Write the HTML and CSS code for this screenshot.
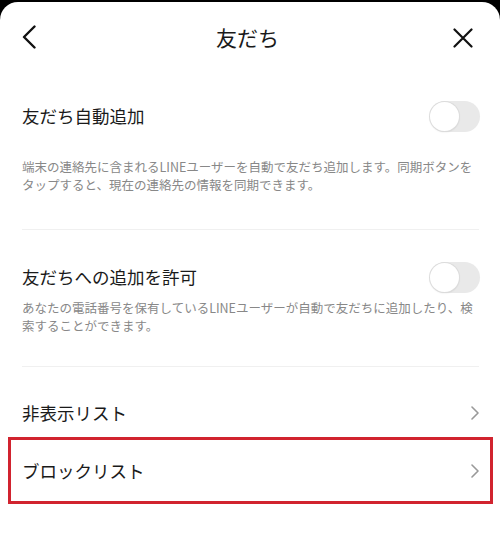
FILE: index.html
```html
<!DOCTYPE html>
<html lang="ja">
<head>
<meta charset="utf-8">
<link rel="stylesheet" href="styles.css">
</head>
<body>
<div class="sheet">
  <header class="header">
    <svg class="icon-back" width="14" height="24" viewBox="0 0 14 24"><path d="M12.5 1.5 L2 12 L12.5 22.5" fill="none" stroke="#111" stroke-width="2.4" stroke-linecap="round" stroke-linejoin="round"/></svg>
    <h1 class="title">友だち</h1>
    <svg class="icon-close" width="20" height="20" viewBox="0 0 20 20"><path d="M1.5 1.5 L18.5 18.5 M18.5 1.5 L1.5 18.5" fill="none" stroke="#111" stroke-width="2.2" stroke-linecap="round"/></svg>
  </header>

  <section class="section s1">
    <div class="row">
      <span class="label">友だち自動追加</span>
      <span class="toggle"><span class="knob"></span></span>
    </div>
    <p class="desc d1">端末の連絡先に含まれるLINEユーザーを自動で友だち追加します。同期ボタンをタップすると、現在の連絡先の情報を同期できます。</p>
  </section>
  <div class="divider"></div>

  <section class="section s2">
    <div class="row">
      <span class="label">友だちへの追加を許可</span>
      <span class="toggle"><span class="knob"></span></span>
    </div>
    <p class="desc d2">あなたの電話番号を保有しているLINEユーザーが自動で友だちに追加したり、検索することができます。</p>
  </section>
  <div class="divider"></div>

  <section class="list">
    <div class="link-row">
      <span class="label">非表示リスト</span>
      <svg class="chev" width="8" height="14" viewBox="0 0 8 14"><path d="M1 1 L7 7 L1 13" fill="none" stroke="#999" stroke-width="1.6" stroke-linecap="round" stroke-linejoin="round"/></svg>
    </div>
    <div class="link-row highlighted">
      <span class="label">ブロックリスト</span>
      <svg class="chev" width="8" height="14" viewBox="0 0 8 14"><path d="M1 1 L7 7 L1 13" fill="none" stroke="#999" stroke-width="1.6" stroke-linecap="round" stroke-linejoin="round"/></svg>
    </div>
  </section>
</div>
</body>
</html>
```
FILE: styles.css
```css
html, body {
  margin: 0;
  padding: 0;
  background: #000;
}
body {
  width: 500px;
  height: 546px;
  overflow: hidden;
  font-family: "Noto Sans CJK JP", "Noto Sans", sans-serif;
  color: #1a1a1a;
}
.sheet {
  margin-top: 2px;
  height: 544px;
  background: #fff;
  border-radius: 18px 18px 0 0;
}
.header {
  height: 70px;
  display: flex;
  align-items: center;
  justify-content: space-between;
  padding: 0 27px 0 22px;
}
.title {
  margin: 0;
  font-size: 21px;
  font-weight: 400;
  line-height: 1;
  margin-left: 6px;
}
.icon-close {
  margin-top: 2px;
}
.section {
  padding: 0 20px 0 22px;
}
.s1 {
  padding-top: 26px;
  padding-bottom: 35px;
}
.s2 {
  padding-top: 29px;
  padding-bottom: 31px;
}
.row {
  height: 36px;
  display: flex;
  align-items: center;
  justify-content: space-between;
}
.label {
  font-size: 17.5px;
  line-height: 1;
}
.toggle {
  width: 50px;
  height: 31px;
  border-radius: 16px;
  background: #e9e9e9;
  display: flex;
  align-items: center;
  box-sizing: border-box;
}
.knob {
  width: 29px;
  height: 29px;
  border-radius: 50%;
  background: #fff;
  box-shadow: 0 0 0 1px #dcdcdc, 0 1px 2px rgba(0,0,0,0.12);
}
.desc {
  margin: 0;
  font-size: 12.5px;
  line-height: 18px;
  color: #888;
}
.d1 {
  margin-top: 24px;
}
.d2 {
  margin-top: 4px;
}
.divider {
  height: 1px;
  background: #f0f0f0;
  margin: 0 21px 0 22px;
}
.list {
  padding-top: 22px;
}
.link-row {
  height: 48px;
  display: flex;
  align-items: center;
  justify-content: space-between;
  padding: 0 21px 0 22px;
}
.highlighted {
  height: 67px;
  box-sizing: border-box;
  margin: 0 7px 0 8px;
  border: 3px solid #d1232f;
  padding: 0 11px 0 11px;
}
```
